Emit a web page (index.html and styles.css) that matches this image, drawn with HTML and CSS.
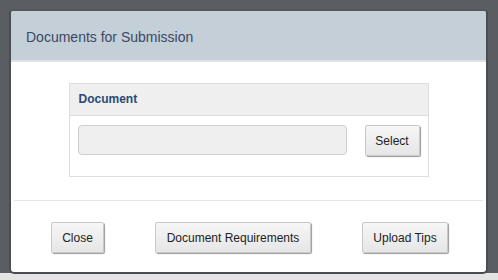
FILE: index.html
```html
<!DOCTYPE html>
<html lang="en">
<head>
    <meta charset="UTF-8">
    <title>Documents for Submission</title>
    <link rel="stylesheet" href="styles.css">
</head>
<body>
<div class="dialog">
    <div class="dialog-head">Documents for Submission</div>
    <div class="dialog-body">
        <div class="panel">
            <div class="panel-head">Document</div>
            <div class="panel-body">
                <div class="file-box"></div>
                <button class="btn btn-select">Select</button>
            </div>
        </div>
    </div>
    <div class="dialog-foot">
        <button class="btn btn-close">Close</button>
        <button class="btn btn-req">Document Requirements</button>
        <button class="btn btn-tips">Upload Tips</button>
    </div>
</div>
</body>
</html>
```

FILE: styles.css
```css
html, body{
    margin: 0;
    padding: 0;
}
body{
    height: 280px;
    padding: 9px 10px 0 9px;
    box-sizing: border-box;
    font-family: "Liberation Sans", Arial, sans-serif;
    background: linear-gradient(to bottom, #5a5d61 273px, #e4e4e4 273px);
    overflow: hidden;
}
.dialog{
    width: 479px;
    height: 265px;
    box-sizing: border-box;
    background: #fff;
    border: 2px solid #4a4d51;
    border-top-color: #55585c;
    border-radius: 5px;
    overflow: hidden;
}
.dialog-head{
    height: 49px;
    line-height: 52px;
    padding-left: 15px;
    background: #c4cfd7;
    border-bottom: 2px solid #dde3e8;
    color: #3b4866;
    font-size: 14px;
}
.dialog-body{
    padding: 21px 0 23px;
    border-bottom: 1px solid #e6e6e6;
    margin: 0 3px;
}
.panel{
    width: 358px;
    margin: 0 auto;
    border: 1px solid #dedede;
}
.panel-head{
    height: 31px;
    line-height: 31px;
    padding-left: 9px;
    background: #efefef;
    border-bottom: 1px solid #dedede;
    color: #2b4a78;
    font-size: 12px;
    font-weight: bold;
}
.panel-body{
    display: flex;
    align-items: flex-start;
    gap: 18px;
    padding: 9px 8px 20px;
}
.file-box{
    width: 267px;
    height: 28px;
    background: #efefef;
    border: 1px solid #cfcfcf;
    border-radius: 4px;
}
.btn{
    height: 31px;
    padding: 0;
    font-family: "Liberation Sans", Arial, sans-serif;
    font-size: 12px;
    color: #222;
    background: linear-gradient(#f6f6f6, #e6e6e6);
    border: 1px solid #c8c8c8;
    border-radius: 2px;
    box-shadow: 1px 1px 1px #9a9a9a;
}
.btn-select{
    width: 55px;
}
.dialog-foot{
    display: flex;
    gap: 51px;
    padding: 21px 0 0 40px;
}
.btn-close{
    width: 53px;
}
.btn-req{
    width: 156px;
}
.btn-tips{
    width: 86px;
}
```
